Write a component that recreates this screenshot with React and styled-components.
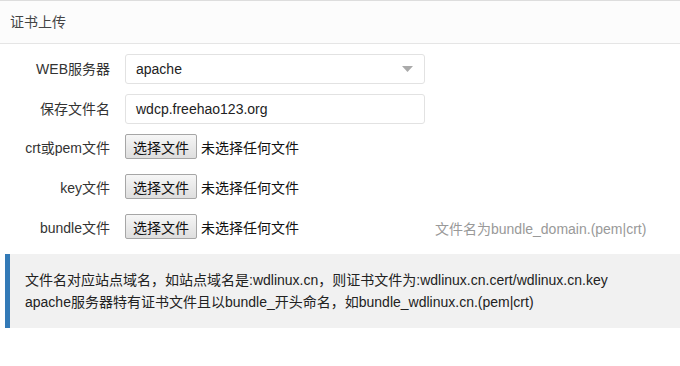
import React from "react";
import styled, { createGlobalStyle } from "styled-components";

const Global = createGlobalStyle`
  html, body {
    margin: 0;
    padding: 0;
    background: #fff;
  }
  body {
    font-family: "Liberation Sans", Arial, "Noto Sans CJK SC", sans-serif;
    font-size: 14px;
    color: #333;
  }
`;

const Panel = styled.section`
  border-top: 1px solid #ddd;
  width: 680px;
`;

const Header = styled.div`
  height: 42px;
  line-height: 42px;
  padding: 0 10px;
  background: #fcfcfc;
  border-bottom: 1px solid #e5e5e5;
  color: #444;
  font-size: 14px;
`;

const Form = styled.div`
  padding-top: 10px;
`;

const Row = styled.div`
  display: flex;
  align-items: ${(p) => (p.$file ? "flex-start" : "center")};
  height: 30px;
  margin-bottom: 10px;
`;

const Label = styled.label`
  width: 110px;
  margin-right: 15px;
  text-align: right;
  line-height: ${(p) => (p.$file ? "28px" : "30px")};
  flex-shrink: 0;
`;

const Select = styled.div`
  box-sizing: border-box;
  width: 300px;
  height: 30px;
  border: 1px solid #e2e2e2;
  border-radius: 3px;
  padding: 0 11px 0 10px;
  display: flex;
  align-items: center;
  justify-content: space-between;
  color: #222;
`;

const Input = styled.div`
  box-sizing: border-box;
  width: 300px;
  height: 30px;
  border: 1px solid #e2e2e2;
  border-radius: 3px;
  padding: 0 10px;
  line-height: 28px;
  color: #222;
`;

const FileBox = styled.div`
  width: 300px;
  display: flex;
  align-items: center;
  height: 25px;
`;

const FileButton = styled.button`
  box-sizing: border-box;
  height: 25px;
  width: 72px;
  padding: 0;
  font: inherit;
  font-size: 14px;
  color: #111;
  background: linear-gradient(#f6f6f6, #dedede);
  border: 1px solid #a6a6a6;
  border-radius: 2px;
`;

const FileText = styled.span`
  margin-left: 4px;
  color: #111;
`;

const Hint = styled.span`
  margin-left: 10px;
  padding-top: 3px;
  line-height: 25px;
  color: #999;
`;

const Note = styled.div`
  margin: 9px 0 0 5px;
  background: #f1f1f1;
  border-left: 5px solid #337ab7;
  padding: 15px;
  line-height: 22px;
  color: #222;
`;

const Arrow = () => (
  <svg width="11" height="6" viewBox="0 0 11 6">
    <path d="M0 0 L11 0 L5.5 6 Z" fill="#aaa" />
  </svg>
);

const files = [
  { label: "crt或pem文件" },
  { label: "key文件" },
  { label: "bundle文件", hint: "文件名为bundle_domain.(pem|crt)" },
];

export default function App() {
  return (
    <>
      <Global />
      <Panel>
        <Header>证书上传</Header>
        <Form>
          <Row>
            <Label>WEB服务器</Label>
            <Select>
              <span>apache</span>
              <Arrow />
            </Select>
          </Row>
          <Row>
            <Label>保存文件名</Label>
            <Input>wdcp.freehao123.org</Input>
          </Row>
          {files.map((f) => (
            <Row $file key={f.label}>
              <Label $file>{f.label}</Label>
              <FileBox>
                <FileButton>选择文件</FileButton>
                <FileText>未选择任何文件</FileText>
              </FileBox>
              {f.hint && <Hint>{f.hint}</Hint>}
            </Row>
          ))}
        </Form>
        <Note>
          文件名对应站点域名，如站点域名是:wdlinux.cn，则证书文件为:wdlinux.cn.cert/wdlinux.cn.key
          <br />
          apache服务器特有证书文件且以bundle_开头命名，如bundle_wdlinux.cn.(pem|crt)
        </Note>
      </Panel>
    </>
  );
}
